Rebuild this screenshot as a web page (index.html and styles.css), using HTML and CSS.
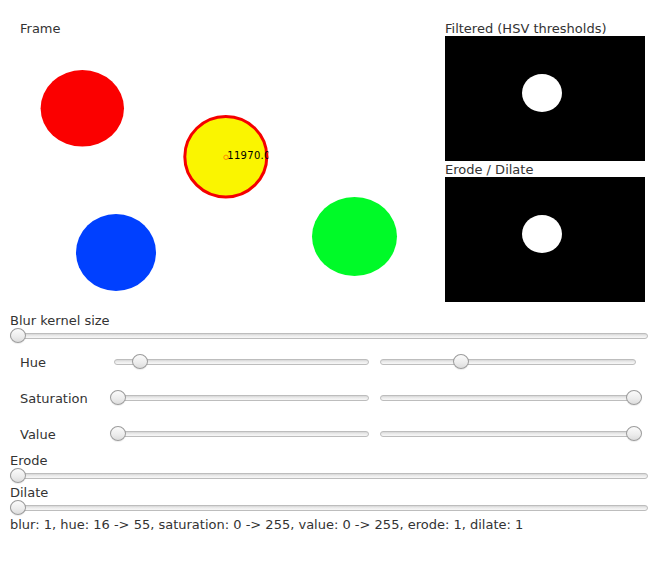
FILE: index.html
```html
<!DOCTYPE html>
<html>
<head>
<meta charset="utf-8">
<link rel="stylesheet" href="styles.css">
</head>
<body>
<div class="app">
  <div class="top">
    <div class="frame-pane">
      <div class="label">Frame</div>
      <svg class="frame" width="415" height="266" viewBox="0 0 415 266">
        <defs>
          <clipPath id="txtclip"><rect x="0" y="0" width="248.5" height="266"/></clipPath>
        </defs>
        <ellipse cx="62.3" cy="72.3" rx="41.7" ry="38.3" fill="#fb0000"/>
        <ellipse cx="205.8" cy="120.7" rx="41" ry="40.2" fill="#faf500" stroke="#f50000" stroke-width="3"/>
        <ellipse cx="96" cy="216.5" rx="40" ry="38.5" fill="#0040ff"/>
        <ellipse cx="334.5" cy="200.5" rx="42.5" ry="39.5" fill="#00fa28"/>
        <circle cx="206" cy="121.3" r="2.2" fill="none" stroke="#ff8a00" stroke-width="1"/>
        <text class="area" x="207.3" y="123" clip-path="url(#txtclip)">11970.0</text>
      </svg>
    </div>
    <div class="side">
      <div class="label">Filtered (HSV thresholds)</div>
      <svg class="mask" width="200" height="125" viewBox="0 0 200 125">
        <rect width="200" height="125" fill="#000"/>
        <ellipse cx="97" cy="57" rx="20" ry="19" fill="#fff"/>
      </svg>
      <div class="label">Erode / Dilate</div>
      <svg class="mask" width="200" height="125" viewBox="0 0 200 125">
        <rect width="200" height="125" fill="#000"/>
        <ellipse cx="97" cy="57" rx="20" ry="19" fill="#fff"/>
      </svg>
    </div>
  </div>

  <div class="label">Blur kernel size</div>
  <div class="slider full"><div class="track"></div><div class="thumb" style="left: 0%"></div></div>

  <div class="ranges">
    <div class="rlabel">Hue</div>
    <div class="slider inset"><div class="track"></div><div class="thumb" style="left: calc(0.0894 * (100% - 16px))"></div></div>
    <div class="slider inset wide"><div class="track"></div><div class="thumb" style="left: calc(0.3073 * (100% - 16px))"></div></div>

    <div class="rlabel">Saturation</div>
    <div class="slider inset"><div class="track"></div><div class="thumb" style="left: 0%"></div></div>
    <div class="slider inset wide"><div class="track"></div><div class="thumb" style="left: calc(100% - 16px)"></div></div>

    <div class="rlabel">Value</div>
    <div class="slider inset"><div class="track"></div><div class="thumb" style="left: 0%"></div></div>
    <div class="slider inset wide"><div class="track"></div><div class="thumb" style="left: calc(100% - 16px)"></div></div>
  </div>

  <div class="label">Erode</div>
  <div class="slider full"><div class="track"></div><div class="thumb" style="left: 0%"></div></div>
  <div class="label">Dilate</div>
  <div class="slider full"><div class="track"></div><div class="thumb" style="left: 0%"></div></div>

  <div class="label">blur: 1, hue: 16 -&gt; 55, saturation: 0 -&gt; 255, value: 0 -&gt; 255, erode: 1, dilate: 1</div>
</div>
</body>
</html>
```

FILE: styles.css
```css
html, body {
  margin: 0;
  padding: 0;
  background: #ffffff;
}

.app {
  box-sizing: border-box;
  width: 668px;
  padding: 20px 10px 0 10px;
  font-family: "DejaVu Sans", "Liberation Sans", sans-serif;
  font-size: 13px;
  line-height: 16px;
  color: #333333;
}

.top {
  display: flex;
  height: 282px;
  margin-bottom: 10px;
}

.frame-pane {
  box-sizing: border-box;
  width: 435px;
  padding-left: 10px;
  flex: none;
}

.frame {
  display: block;
  overflow: visible;
}

.area {
  font-family: "DejaVu Sans", sans-serif;
  font-size: 10px;
  fill: #000000;
  letter-spacing: 0.3px;
}

.side {
  width: 200px;
  flex: none;
}

.mask {
  display: block;
}

.label {
  box-sizing: border-box;
  height: 16px;
  padding-top: 1px;
  white-space: nowrap;
}

.rlabel {
  padding-top: 2px;
  white-space: nowrap;
}

.slider {
  position: relative;
  height: 16px;
}

.slider.full {
  margin-right: 10px;
}

.track {
  position: absolute;
  left: 0;
  right: 0;
  top: 5px;
  height: 6px;
  box-sizing: border-box;
  border: 1px solid #bdbdbd;
  border-radius: 3px;
  background: linear-gradient(to bottom, #d6d6d6 0%, #ececec 45%, #f7f7f7 100%);
}

.slider.inset .track {
  left: 4px;
  right: 4px;
}

.slider.inset.wide .track {
  right: 6px;
}

.thumb {
  position: absolute;
  top: 0;
  width: 16px;
  height: 15px;
  box-sizing: border-box;
  border: 1px solid #9c9c9c;
  border-radius: 50%;
  background: linear-gradient(to bottom, #fbfbfb 0%, #ececec 60%, #dcdcdc 100%);
  box-shadow: 0 1px 1px rgba(0, 0, 0, 0.08);
}

.ranges {
  display: grid;
  grid-template-columns: 87px 263px 266px;
  grid-auto-rows: 36px;
  column-gap: 3px;
  align-items: center;
  padding-left: 10px;
}
```
